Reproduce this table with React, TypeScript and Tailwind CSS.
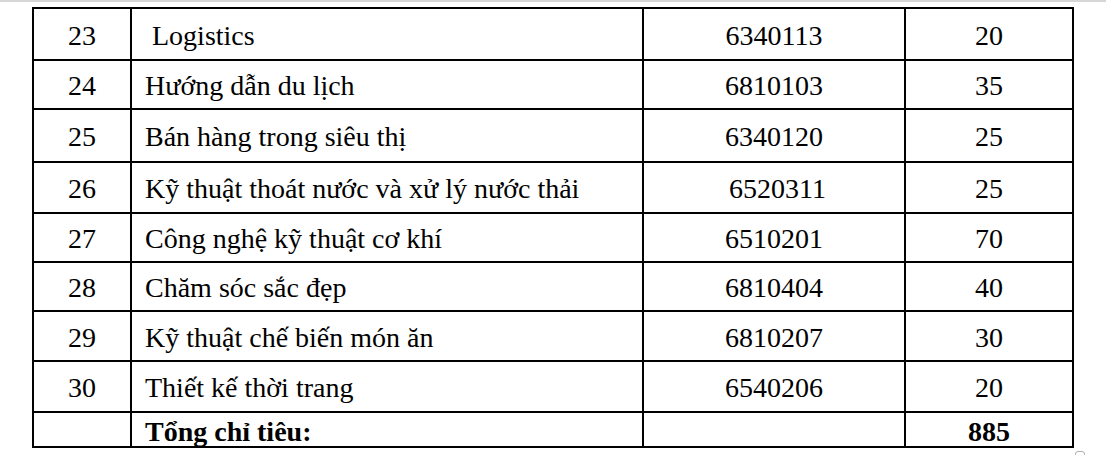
const rows = [
  { no: "23", name: " Logistics", code: "6340113", qty: "20", h: "h-[52px]" },
  { no: "24", name: "Hướng dẫn du lịch", code: "6810103", qty: "35", h: "h-[49px]" },
  { no: "25", name: "Bán hàng trong siêu thị", code: "6340120", qty: "25", h: "h-[53px]" },
  { no: "26", name: "Kỹ thuật thoát nước và xử lý nước thải", code: " 6520311", qty: "25", h: "h-[51px]" },
  { no: "27", name: "Công nghệ kỹ thuật cơ khí", code: "6510201", qty: "70", h: "h-[49px]" },
  { no: "28", name: "Chăm sóc sắc đẹp", code: "6810404", qty: "40", h: "h-[49px]" },
  { no: "29", name: "Kỹ thuật chế biến món ăn", code: "6810207", qty: "30", h: "h-[50px]" },
  { no: "30", name: "Thiết kế thời trang", code: "6540206", qty: "20", h: "h-[51px]" },
];

function Cell({ children, className = "" }: { children?: React.ReactNode; className?: string }) {
  return (
    <div className={`flex items-center border-l-2 border-t-2 border-black pt-[3px] ${className}`}>
      {children}
    </div>
  );
}

export default function App() {
  return (
    <div className="relative h-[455px] w-[1106px] overflow-hidden bg-white font-['Liberation_Serif','Times_New_Roman',serif] text-[28px] leading-none text-black">
      <div className="h-[2px] w-full bg-[#d6d6d6]" />
      <div className="ml-[32px] mt-[5px] w-[1042px] border-b-2 border-r-2 border-black">
        {rows.map((r) => (
          <div key={r.no} className={`grid grid-cols-[98px_512px_262px_168px] ${r.h}`}>
            <Cell className="justify-center">{r.no}</Cell>
            <Cell className="whitespace-pre pl-[13px]">{r.name}</Cell>
            <Cell className="justify-center whitespace-pre">{r.code}</Cell>
            <Cell className="justify-center">{r.qty}</Cell>
          </div>
        ))}
        <div className="grid h-[35px] grid-cols-[98px_512px_262px_168px] font-bold">
          <Cell />
          <Cell className="pl-[13px] pt-[4px]">Tổng chỉ tiêu:</Cell>
          <Cell />
          <Cell className="justify-center pt-[4px]">885</Cell>
        </div>
      </div>
      <div className="absolute left-[1075px] top-[451px] h-[8px] w-[10px] rounded-[3px] border border-[#b0b0b0]" />
    </div>
  );
}
